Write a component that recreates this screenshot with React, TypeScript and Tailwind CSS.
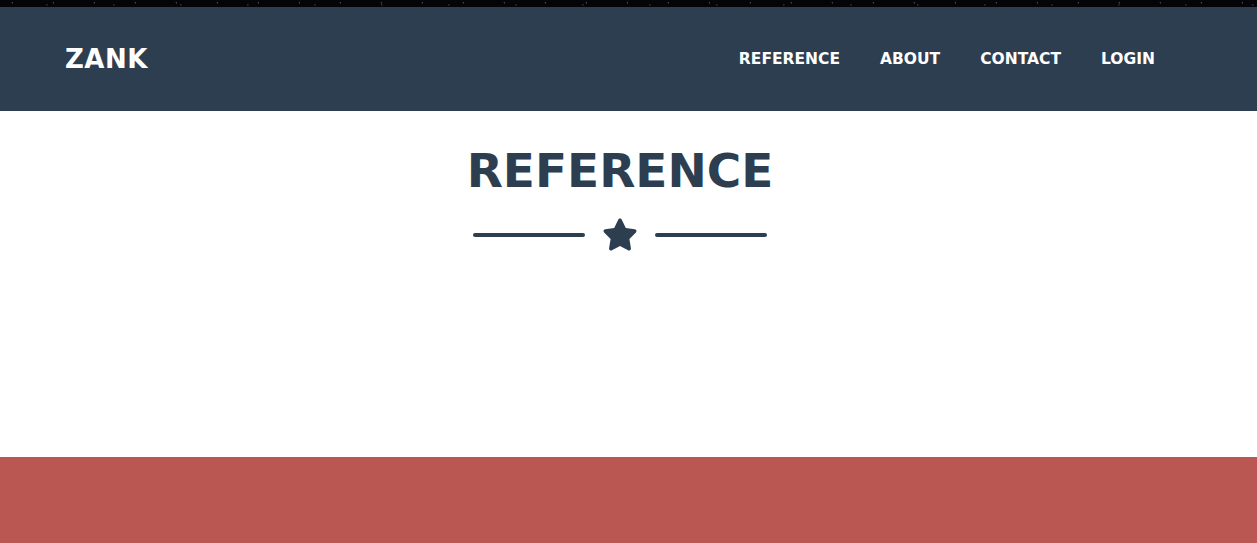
import React from "react";

const links = ["REFERENCE", "ABOUT", "CONTACT", "LOGIN"];

function Star() {
  return (
    <svg viewBox="0 0 576 512" className="h-[33px] w-[36px] fill-[#2c3e50]">
      <path d="M316.9 18C311.6 7 300.4 0 288.1 0s-23.4 7-28.8 18L195 150.3 51.4 171.5c-12 1.8-22 10.2-25.7 21.7s-.7 24.2 7.9 32.7L137.8 329 113.2 474.7c-2 12 3 24.2 12.9 31.3s23 8 33.8 2.3l128.3-68.5 128.3 68.5c10.8 5.7 23.9 4.9 33.8-2.3s14.9-19.3 12.9-31.3L438.5 329 542.7 225.9c8.6-8.5 11.7-21.2 7.9-32.7s-13.7-19.9-25.7-21.7L381.2 150.3 316.9 18z" />
    </svg>
  );
}

export default function App() {
  return (
    <div className="min-h-screen bg-white font-['DejaVu_Sans',sans-serif]">
      {/* starry strip from the hero image above */}
      <div className="h-[7px] bg-[#050508] bg-[radial-gradient(circle_at_30%_40%,#44445a_0.5px,transparent_1px),radial-gradient(circle_at_70%_70%,#2e2e40_0.5px,transparent_1px)] bg-[length:41px_7px,67px_7px]" />
      <nav className="flex h-[104px] items-center justify-between bg-[#2c3e50] pl-[65px] pr-[102px] text-white">
        <a href="#" className="text-[26px] font-bold tracking-[0.5px]">ZANK</a>
        <div className="flex gap-[40px] pt-[2px] text-[15.5px] font-bold">
          {links.map((l) => (
            <a key={l} href="#">{l}</a>
          ))}
        </div>
      </nav>
      <section className="flex h-[346px] flex-col items-center pr-[17px] pt-[30px] text-[#2c3e50]">
        <h1 className="text-[47px] font-bold leading-[60px]">REFERENCE</h1>
        <div className="mt-[17px] flex items-center gap-[17px]">
          <div className="h-[4px] w-[112px] rounded-full bg-[#2c3e50]" />
          <Star />
          <div className="h-[4px] w-[112px] rounded-full bg-[#2c3e50]" />
        </div>
      </section>
      <footer className="h-[86px] bg-[#bb5752]" />
    </div>
  );
}
